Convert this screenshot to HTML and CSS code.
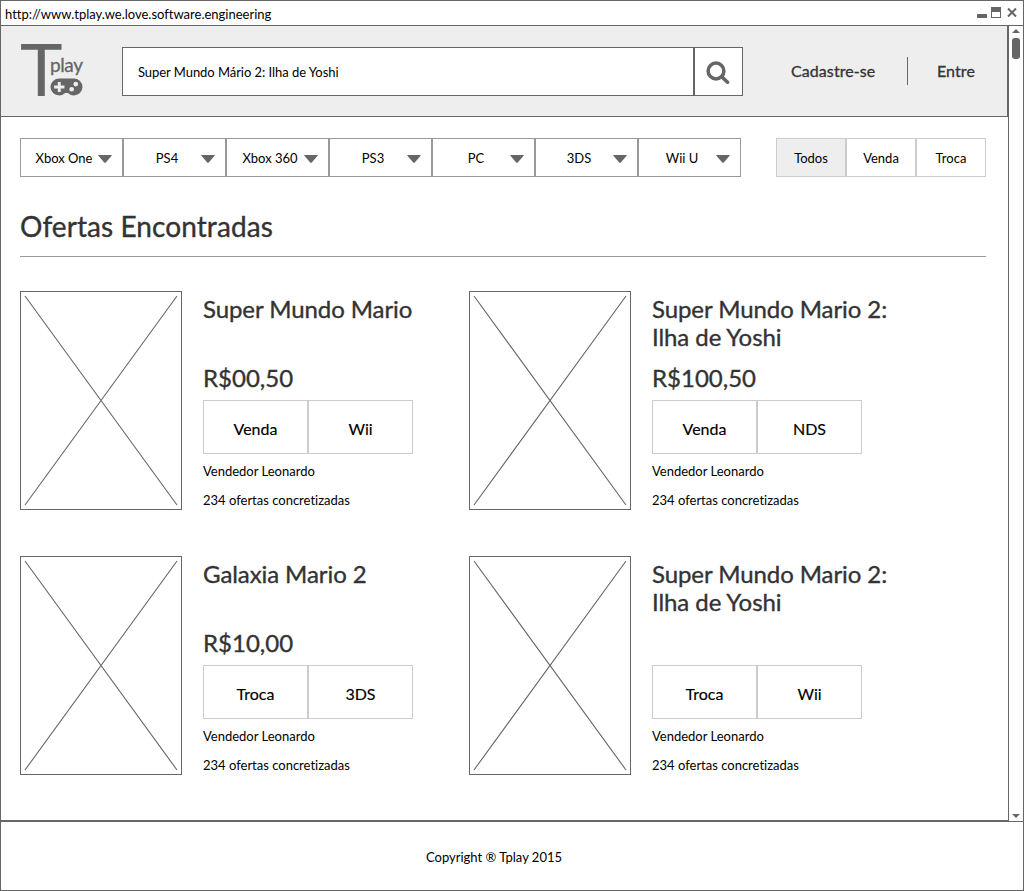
FILE: index.html
```html
<!DOCTYPE html>
<html lang="pt-BR">
<head>
<meta charset="utf-8">
<title>Tplay</title>
<link rel="stylesheet" href="styles.css">
</head>
<body>
<svg class="defs" width="0" height="0">
  <symbol id="caret" viewBox="0 0 14 8"><path d="M0.5 0H13.5Q14 0 13.6 0.7L7.8 7.4Q7 8.2 6.2 7.4L0.4 0.7Q0 0 0.5 0Z" fill="#666"/></symbol>
  <symbol id="cross" viewBox="0 0 160 217"><path d="M4 4L156 213M156 4L4 213" stroke="#666" stroke-width="1.1" fill="none"/></symbol>
</svg>
<div class="window">
  <div class="titlebar">
    <span class="url">http://www.tplay.we.love.software.engineering</span>
    <svg class="controls" width="40" height="12" viewBox="0 0 40 12">
      <rect x="0" y="7" width="10" height="4" fill="#666"/>
      <path d="M14 0H24V11H14ZM15 5V10H23V5Z" fill="#666" fill-rule="evenodd"/>
      <path d="M31 1.5L39 9.5M39 1.5L31 9.5" stroke="#666" stroke-width="2"/>
    </svg>
  </div>
  <div class="viewport">
    <div class="page">
      <header class="header">
        <div class="logo">
          <span class="logo-t">T</span>
          <div class="logo-side">
            <span class="logo-play">play</span>
            <svg width="33" height="18" viewBox="0 0 32 18" preserveAspectRatio="none">
              <path fill="#666" fill-rule="evenodd" d="M9 .5H23A8.5 8.5 0 0 1 23 17.5Q20 17.5 17.4 15H14.6Q12 17.5 9 17.5A8.5 8.5 0 0 1 9 .5ZM7.6 4V7.6H4V10.4H7.6V14H10.4V10.4H14V7.6H10.4V4ZM25 3.8A2.3 2.3 0 1 0 25 8.4A2.3 2.3 0 1 0 25 3.8ZM21 8.9A2.3 2.3 0 1 0 21 13.5A2.3 2.3 0 1 0 21 8.9Z"/>
            </svg>
          </div>
        </div>
        <div class="search">
          <div class="search-field">Super Mundo Mário 2: Ilha de Yoshi</div>
          <div class="search-button">
            <svg width="24" height="24" viewBox="0 0 24 24"><circle cx="10" cy="10" r="7.9" fill="none" stroke="#666" stroke-width="3.5"/><path d="M15.8 15.8L21.5 21.2" stroke="#666" stroke-width="3.6" stroke-linecap="round"/></svg>
          </div>
        </div>
        <nav class="account">
          <span class="signup">Cadastre-se</span>
          <span class="divider"></span>
          <span class="signin">Entre</span>
        </nav>
      </header>
      <main class="content">
        <div class="filters">
          <div class="platforms">
            <div class="platform"><span>Xbox One</span><svg class="caret"><use href="#caret"/></svg></div>
            <div class="platform"><span>PS4</span><svg class="caret"><use href="#caret"/></svg></div>
            <div class="platform"><span>Xbox 360</span><svg class="caret"><use href="#caret"/></svg></div>
            <div class="platform"><span>PS3</span><svg class="caret"><use href="#caret"/></svg></div>
            <div class="platform"><span>PC</span><svg class="caret"><use href="#caret"/></svg></div>
            <div class="platform"><span>3DS</span><svg class="caret"><use href="#caret"/></svg></div>
            <div class="platform"><span>Wii U</span><svg class="caret"><use href="#caret"/></svg></div>
          </div>
          <div class="kinds">
            <div class="kind active">Todos</div>
            <div class="kind">Venda</div>
            <div class="kind">Troca</div>
          </div>
        </div>
        <h1 class="heading">Ofertas Encontradas</h1>
        <div class="offers">
          <article class="offer">
            <div class="cover"><svg width="160" height="217"><use href="#cross"/></svg></div>
            <div class="info">
              <h2 class="title">Super Mundo Mario</h2>
              <div class="price">R$00,50</div>
              <div class="tags"><div class="tag">Venda</div><div class="tag">Wii</div></div>
              <p class="meta">Vendedor Leonardo</p>
              <p class="meta">234 ofertas concretizadas</p>
            </div>
          </article>
          <article class="offer">
            <div class="cover"><svg width="160" height="217"><use href="#cross"/></svg></div>
            <div class="info">
              <h2 class="title">Super Mundo Mario 2:<br>Ilha de Yoshi</h2>
              <div class="price">R$100,50</div>
              <div class="tags"><div class="tag">Venda</div><div class="tag">NDS</div></div>
              <p class="meta">Vendedor Leonardo</p>
              <p class="meta">234 ofertas concretizadas</p>
            </div>
          </article>
          <article class="offer">
            <div class="cover"><svg width="160" height="217"><use href="#cross"/></svg></div>
            <div class="info">
              <h2 class="title">Galaxia Mario 2</h2>
              <div class="price">R$10,00</div>
              <div class="tags"><div class="tag">Troca</div><div class="tag">3DS</div></div>
              <p class="meta">Vendedor Leonardo</p>
              <p class="meta">234 ofertas concretizadas</p>
            </div>
          </article>
          <article class="offer">
            <div class="cover"><svg width="160" height="217"><use href="#cross"/></svg></div>
            <div class="info">
              <h2 class="title">Super Mundo Mario 2:<br>Ilha de Yoshi</h2>
              <div class="price"></div>
              <div class="tags"><div class="tag">Troca</div><div class="tag">Wii</div></div>
              <p class="meta">Vendedor Leonardo</p>
              <p class="meta">234 ofertas concretizadas</p>
            </div>
          </article>
        </div>
      </main>
    </div>
    <div class="scrollbar">
      <svg width="8" height="4" viewBox="0 0 8 4"><path d="M0 4L4 0L8 4Z" fill="#666"/></svg>
      <div class="thumb"></div>
      <svg class="down" width="8" height="4" viewBox="0 0 8 4"><path d="M0 0H8L4 4Z" fill="#666"/></svg>
    </div>
  </div>
  <footer class="footer">Copyright ® Tplay 2015</footer>
</div>
</body>
</html>
```
FILE: styles.css
```css
* { box-sizing: border-box; }
body { margin: 0; background: #fff; color: #000; font: 13px/16px Lato, sans-serif; font-variant-ligatures: none; }
h1, h2, p { margin: 0; font-weight: 400; }
svg { display: block; flex: none; }
.defs { position: absolute; }
.window { width: 1024px; height: 891px; border: 1px solid #666; display: flex; flex-direction: column; overflow: hidden; }
.titlebar { height: 25px; border-bottom: 1px solid #666; display: flex; justify-content: space-between; padding: 5px 5px 0 4px; }
.controls { margin-top: 1px; margin-right: 1px; }
.viewport { display: flex; height: 796px; border-bottom: 1px solid #666; }
.page { width: 1008px; border-right: 1px solid #666; border-bottom: 1px solid #666; }
.header { height: 91px; background: #eee; border-bottom: 1px solid #666; border-right: 1px solid #666; display: flex; align-items: flex-start; padding-left: 19px; }
.logo { width: 102px; display: flex; color: #666; padding-top: 6px; }
.logo-t { font-size: 72px; line-height: 72px; width: 30px; }
.logo-side { padding-top: 20px; }
.logo-play { display: block; font-size: 19px; line-height: 25px; height: 26px; letter-spacing: -0.4px; -webkit-text-stroke: 0.3px currentColor; }
.search { display: flex; margin-top: 21px; }
.search-field { width: 572px; height: 49px; border: 1px solid #666; background: #fff; padding: 16px 15px; letter-spacing: -0.05px; }
.search-button { width: 49px; height: 49px; border: 1px solid #666; background: #fff; padding: 13px 0 0 11px; }
.account { display: flex; align-items: center; margin-top: 31px; height: 28px; font-size: 16px; color: #333; padding-left: 48px; -webkit-text-stroke: 0.3px currentColor; letter-spacing: 0.08px; }
.signup { width: 116px; }
.divider { width: 1px; height: 28px; background: #666; }
.signin { padding-left: 29px; }
.content { padding: 21px 22px 0 19px; }
.filters { display: flex; justify-content: space-between; }
.platforms, .kinds, .tags { display: flex; }
.platform { width: 103px; height: 39px; border: 1px solid #999; display: flex; align-items: center; justify-content: space-between; padding-right: 10px; }
.platform span { flex: 1; text-align: center; padding-left: 9px; white-space: nowrap; }
.caret { width: 14px; height: 8px; margin-top: 2px; }
.kind { width: 70px; height: 39px; border: 1px solid #ccc; text-align: center; line-height: 38px; }
.active { background: #eee; }
.heading { font-size: 28px; line-height: 34px; color: #333; margin-top: 32px; height: 48px; border-bottom: 1px solid #999; letter-spacing: 0.08px; -webkit-text-stroke: 0.35px currentColor; }
.offers { display: grid; grid-template-columns: 449px 1fr; row-gap: 46px; padding-top: 34px; }
.offer { display: flex; gap: 21px; height: 219px; }
.cover { width: 162px; height: 219px; border: 1px solid #666; flex: none; }
.title, .price { font-size: 24px; line-height: 28px; color: #333; -webkit-text-stroke: 0.35px currentColor; padding-top: 4px; }
.title { height: 69px; white-space: nowrap; letter-spacing: -0.08px; }
.price { height: 40px; }
.tag { width: 105px; height: 54px; border: 1px solid #ccc; font-size: 16px; text-align: center; line-height: 55px; -webkit-text-stroke: 0.15px currentColor; }
.meta { padding-top: 9px; height: 29px; }
.scrollbar { width: 14px; display: flex; flex-direction: column; padding: 3px 3px; }
.thumb { width: 8px; height: 21px; border-radius: 3px; background: #666; margin-top: 5px; }
.down { margin-top: auto; }
.footer { height: 68px; padding: 27px 0 0 425px; }
```
